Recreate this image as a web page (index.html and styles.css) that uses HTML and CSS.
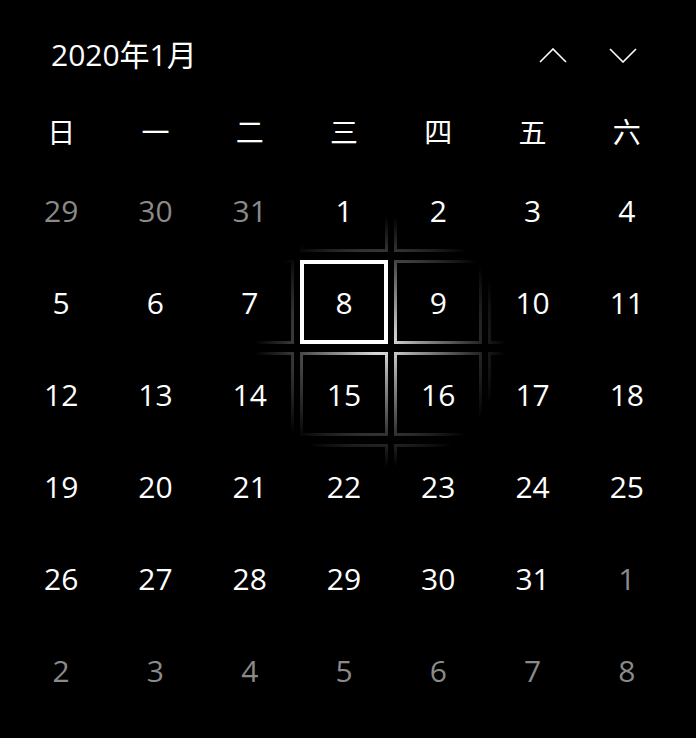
FILE: index.html
```html
<!DOCTYPE html>
<html lang="zh">
<head>
<meta charset="utf-8">
<title>日历</title>
<link rel="stylesheet" href="styles.css">
</head>
<body>
<div class="calendar">
  <div class="header">
    <div class="title">2020年1月</div>
    <div class="nav">
      <button class="nav-btn" aria-label="上一个">
        <svg width="28" height="15" viewBox="0 0 28 15"><polyline points="1,14 14,1 27,14" fill="none" stroke="#fff" stroke-width="1.6"/></svg>
      </button>
      <button class="nav-btn" aria-label="下一个">
        <svg width="28" height="15" viewBox="0 0 28 15"><polyline points="1,1 14,14 27,1" fill="none" stroke="#fff" stroke-width="1.6"/></svg>
      </button>
    </div>
  </div>
  <div class="weekdays">
    <div>日</div><div>一</div><div>二</div><div>三</div><div>四</div><div>五</div><div>六</div>
  </div>
  <div class="grid">
    <div class="cell other"><span class="box">29</span></div>
    <div class="cell other"><span class="box">30</span></div>
    <div class="cell other"><span class="box">31</span></div>
    <div class="cell"><span class="box">1</span></div>
    <div class="cell"><span class="box">2</span></div>
    <div class="cell"><span class="box">3</span></div>
    <div class="cell"><span class="box">4</span></div>

    <div class="cell"><span class="box">5</span></div>
    <div class="cell"><span class="box">6</span></div>
    <div class="cell"><span class="box">7</span></div>
    <div class="cell selected"><span class="box">8</span></div>
    <div class="cell"><span class="box">9</span></div>
    <div class="cell"><span class="box">10</span></div>
    <div class="cell"><span class="box">11</span></div>

    <div class="cell"><span class="box">12</span></div>
    <div class="cell"><span class="box">13</span></div>
    <div class="cell"><span class="box">14</span></div>
    <div class="cell"><span class="box">15</span></div>
    <div class="cell"><span class="box">16</span></div>
    <div class="cell"><span class="box">17</span></div>
    <div class="cell"><span class="box">18</span></div>

    <div class="cell"><span class="box">19</span></div>
    <div class="cell"><span class="box">20</span></div>
    <div class="cell"><span class="box">21</span></div>
    <div class="cell"><span class="box">22</span></div>
    <div class="cell"><span class="box">23</span></div>
    <div class="cell"><span class="box">24</span></div>
    <div class="cell"><span class="box">25</span></div>

    <div class="cell"><span class="box">26</span></div>
    <div class="cell"><span class="box">27</span></div>
    <div class="cell"><span class="box">28</span></div>
    <div class="cell"><span class="box">29</span></div>
    <div class="cell"><span class="box">30</span></div>
    <div class="cell"><span class="box">31</span></div>
    <div class="cell other"><span class="box">1</span></div>

    <div class="cell other"><span class="box">2</span></div>
    <div class="cell other"><span class="box">3</span></div>
    <div class="cell other"><span class="box">4</span></div>
    <div class="cell other"><span class="box">5</span></div>
    <div class="cell other"><span class="box">6</span></div>
    <div class="cell other"><span class="box">7</span></div>
    <div class="cell other"><span class="box">8</span></div>
  </div>
</div>
</body>
</html>
```
FILE: styles.css
```css
html, body {
  margin: 0;
  padding: 0;
  background: #000;
}
body {
  width: 696px;
  height: 738px;
  overflow: hidden;
  color: #fff;
  font-family: "Open Sans", "Noto Sans CJK SC", sans-serif;
  font-weight: 400;
}
.calendar {
  display: flex;
  flex-direction: column;
}
.header {
  height: 110px;
  display: flex;
  align-items: center;
  justify-content: space-between;
  padding: 0 38px 0 51px;
}
.title {
  font-size: 30px;
  line-height: 1;
}
.nav {
  display: flex;
}
.nav-btn {
  width: 70px;
  height: 70px;
  padding: 0;
  border: 0;
  background: transparent;
  display: flex;
  align-items: center;
  justify-content: center;
}
.nav-btn svg {
  display: block;
}
.weekdays {
  display: grid;
  grid-template-columns: repeat(7, 94.29px);
  padding-left: 14px;
  height: 42px;
  align-items: center;
  margin-bottom: 12px;
  font-family: "Noto Sans CJK SC", sans-serif;
  font-weight: 400;
  font-size: 28px;
  line-height: 1;
}
.weekdays div {
  text-align: center;
}
.grid {
  display: grid;
  grid-template-columns: repeat(7, 94.29px);
  grid-auto-rows: 92px;
  padding-left: 14px;
}
.cell {
  display: flex;
  padding: 4px 3px;
  box-sizing: border-box;
}
.box {
  flex: 1;
  display: flex;
  align-items: center;
  justify-content: center;
  font-size: 30px;
  border: 3px solid transparent;
  background-image:
    linear-gradient(#000, #000),
    radial-gradient(circle 126px at 380px 342px, rgba(255,255,255,0.95) 0%, rgba(255,255,255,0.6) 30%, rgba(255,255,255,0.22) 70%, rgba(255,255,255,0) 100%);
  background-clip: padding-box, border-box;
  background-origin: padding-box, border-box;
  background-attachment: scroll, fixed;
}
.other .box {
  color: #8a8a8a;
}
.selected .box {
  background: #000;
  border-color: #fff;
  box-shadow: inset 0 0 0 1px #fff;
}
```
